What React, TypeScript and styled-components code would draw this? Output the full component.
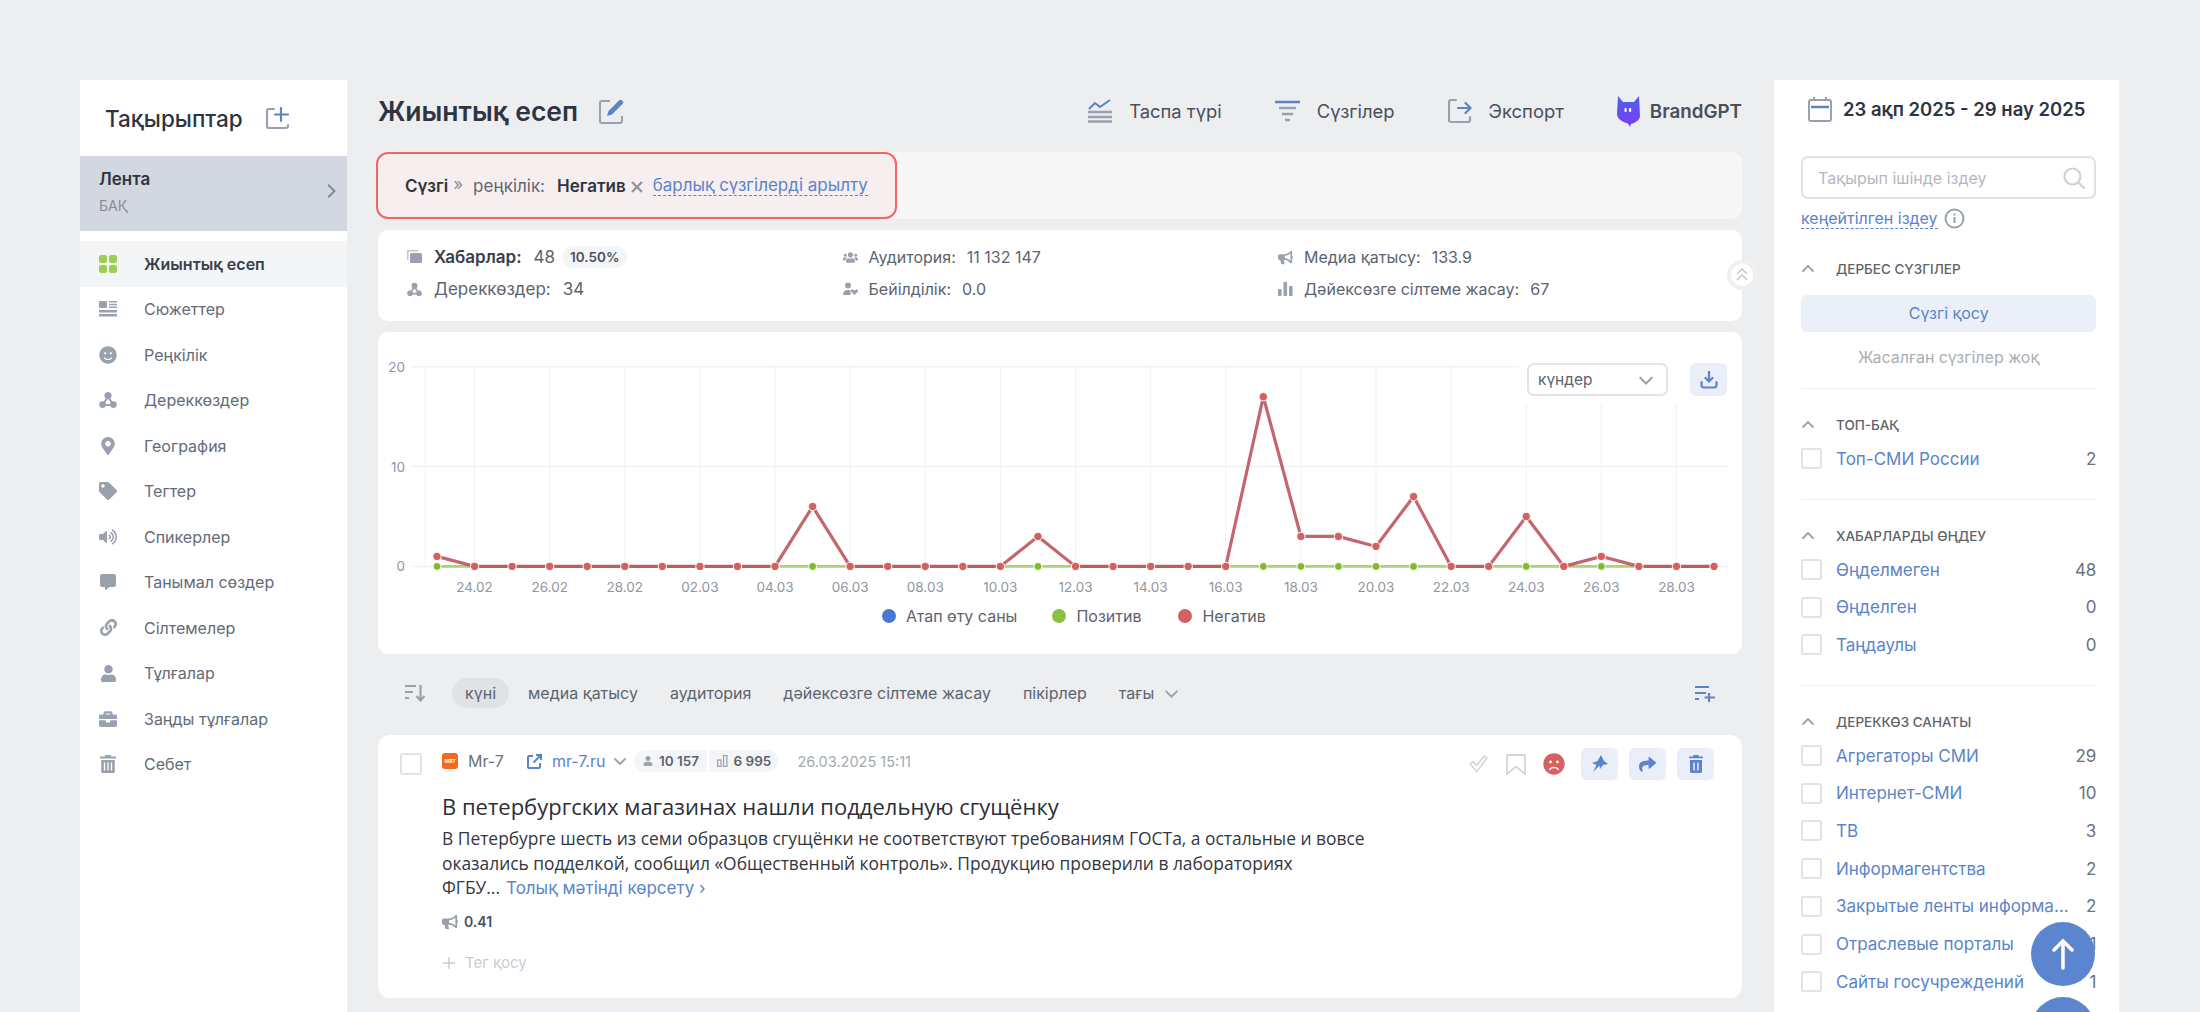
import React from "react";
import styled, { createGlobalStyle } from "styled-components";
import {
  FaBriefcase,
  FaBullhorn,
  FaCommentAlt,
  FaFrown,
  FaLink,
  FaMapMarkerAlt,
  FaShare,
  FaSmile,
  FaTag,
  FaUser,
  FaUsers,
  FaVolumeUp,
} from "react-icons/fa";

const BLUE = "#5b84c9";
const GRAY = "#9aa1ae";

const GlobalStyle = createGlobalStyle`
  html, body {
    margin: 0;
    height: 100%;
    overflow: hidden;
    background: #edeef0;
  }
  body {
    font-family: Inter, "Noto Sans", sans-serif;
    color: #2f3540;
  }
  * {
    box-sizing: border-box;
  }
`;

const Page = styled.div`
  display: flex;
  height: 1012px;
  overflow: hidden;
  padding: 80px 81px 0 80px;
`;

/* left column */
const LeftBar = styled.aside`
  background: #fff;
  flex: 0 0 267px;
  margin-right: 31px;
`;

const LeftHead = styled.div`
  align-items: center;
  display: flex;
  font-size: 22.5px;
  font-weight: 500;
  gap: 22px;
  height: 76px;
  padding: 4px 0 4px 25px;
`;

const Feed = styled.div`
  background: #d3d7df;
  height: 75px;
  margin-bottom: 10px;
  padding: 12px 19px;
  position: relative;
  b {
    display: block;
    font-size: 17px;
    font-weight: 600;
    line-height: 22px;
  }
  span {
    color: #858c99;
    display: block;
    font-size: 14px;
    line-height: 18px;
    margin-top: 7px;
  }
  svg {
    position: absolute;
    right: 8px;
    top: 27px;
  }
`;

const NavItem = styled.div<{ $active?: boolean }>`
  align-items: center;
  background: ${({ $active }) => ($active ? "#f4f5f7" : "transparent")};
  color: ${({ $active }) => ($active ? "#3a404b" : "#646b78")};
  display: flex;
  font-size: 16px;
  font-weight: ${({ $active }) => ($active ? 600 : 400)};
  gap: 27px;
  height: 45.5px;
  padding-left: 19px;
`;

const NavGlyph = styled.span`
  align-items: center;
  color: ${GRAY};
  display: flex;
  flex: 0 0 18px;
  height: 18px;
  justify-content: center;
`;

/* middle column */
const Main = styled.main`
  flex: 0 0 1364px;
  margin-right: 32px;
`;

const TopRow = styled.div`
  align-items: center;
  display: flex;
  height: 62px;
  margin-bottom: 10px;
`;

const Title = styled.h1`
  font-size: 26.5px;
  font-weight: 600;
  margin: 0 21px 0 0;
`;

const ToolList = styled.div`
  align-items: center;
  display: flex;
  gap: 53px;
  margin-left: auto;
`;

const Tool = styled.div<{ $strong?: boolean }>`
  align-items: center;
  color: #4a505c;
  display: flex;
  font-size: ${({ $strong }) => ($strong ? 18.8 : 18.4)}px;
  font-weight: ${({ $strong }) => ($strong ? 600 : 400)};
  gap: ${({ $strong }) => ($strong ? 10 : 17)}px;
`;

const FilterShell = styled.div`
  background: #f7f7f7;
  border-radius: 10px;
  height: 67px;
  margin-bottom: 11px;
`;

const FilterBox = styled.div`
  align-items: center;
  background: #f7eeef;
  border: 2px solid #f56462;
  border-radius: 12px;
  color: #5f6572;
  display: inline-flex;
  font-size: 17px;
  height: 67px;
  margin-left: -2px;
  padding: 0 27px;
  b {
    color: #2f3540;
    font-weight: 600;
  }
`;

const FilterMark = styled.span`
  color: #8a8f9a;
  margin: -3px 10px 0 5px;
`;

const ClearCross = styled.span`
  display: inline-flex;
  margin: 2px 10px 0 5px;
`;

const DashedLink = styled.span`
  border-bottom: 1px dashed ${BLUE};
  color: ${BLUE};
  line-height: 20px;
`;

const StatsCard = styled.section`
  background: #fff;
  border-radius: 10px;
  display: grid;
  grid-template-columns: 435.5px 435.5px 1fr;
  grid-template-rows: 32px 32px;
  height: 91px;
  margin-bottom: 11px;
  padding: 11px 0 0 29px;
  position: relative;
`;

const Stat = styled.div<{ $large?: boolean }>`
  align-items: center;
  color: #5c6370;
  display: flex;
  font-size: ${({ $large }) => ($large ? 17 : 16)}px;
  gap: ${({ $large }) => ($large ? 12 : 11)}px;
  b {
    color: #3a404b;
    font-weight: 600;
  }
  svg {
    flex: 0 0 15px;
  }
`;

const Share = styled.span`
  background: #f4f5f7;
  border-radius: 11px;
  color: #4a505c;
  font-size: 13.5px;
  font-weight: 600;
  line-height: 22px;
  margin-left: -5px;
  padding: 0 8px;
`;

const CollapseKnob = styled.button`
  align-items: center;
  background: #fff;
  border: 4px solid #eff0f2;
  border-radius: 50%;
  display: flex;
  height: 30px;
  justify-content: center;
  padding: 0;
  position: absolute;
  right: -15px;
  top: 30px;
  width: 30px;
`;

const ChartCard = styled.section`
  background: #fff;
  border-radius: 10px;
  height: 322px;
  margin-bottom: 24px;
  position: relative;
  svg text {
    fill: #8f95a1;
    font-family: Inter, sans-serif;
    font-size: 13.5px;
  }
`;

const ChartTools = styled.div`
  background: #fff;
  display: flex;
  gap: 22px;
  height: 45px;
  padding: 5px 0 0 8px;
  position: absolute;
  right: 15px;
  top: 26px;
  width: 208px;
`;

const RangeSelect = styled.div`
  align-items: center;
  background: #fff;
  border: 2px solid #e1e4ea;
  border-radius: 7px;
  color: #5c6370;
  display: flex;
  font-size: 15.5px;
  height: 33px;
  justify-content: space-between;
  padding: 0 12px 0 9px;
  width: 141px;
`;

const SoftButton = styled.button<{ $h: number }>`
  align-items: center;
  background: #e9eef8;
  border: 0;
  border-radius: 6px;
  color: ${BLUE};
  display: flex;
  height: ${({ $h }) => $h}px;
  justify-content: center;
  padding: 0;
  width: 37px;
`;

const Legend = styled.div`
  color: #5c6370;
  display: flex;
  font-size: 16px;
  margin-top: 4px;
  padding-left: 504px;
`;

const LegendItem = styled.span<{ $color: string; $gap: number }>`
  align-items: center;
  display: flex;
  gap: 10px;
  margin-right: ${({ $gap }) => $gap}px;
  line-height: 24px;
  &::before {
    background: ${({ $color }) => $color};
    border-radius: 50%;
    content: "";
    height: 14px;
    width: 14px;
  }
`;

const SortRow = styled.div`
  align-items: center;
  color: #5c6370;
  display: flex;
  font-size: 16px;
  gap: 32px;
  height: 30px;
  margin-bottom: 27px;
  padding: 0 27px;
`;

const SortIconSlot = styled.span`
  display: flex;
  margin-right: -5px;
`;

const SortTab = styled.span<{ $active?: boolean }>`
  background: ${({ $active }) => ($active ? "#dfe2e6" : "transparent")};
  border-radius: 15px;
  line-height: 30px;
  margin-right: ${({ $active }) => ($active ? -13 : 0)}px;
  padding: 0 ${({ $active }) => ($active ? 13 : 0)}px;
  svg {
    margin-left: 10px;
    vertical-align: -2px;
  }
`;

const SortAdd = styled.span`
  display: flex;
  margin-left: auto;
`;

const Article = styled.article`
  background: #fff;
  border-radius: 12px;
  display: grid;
  grid-template-columns: 42px 1fr;
  height: 263px;
  padding: 13px 28px 26px 22px;
`;

const Box = styled.span<{ $size?: number }>`
  background: #fff;
  border: 2px solid #e1e3e9;
  border-radius: 3px;
  display: block;
  flex: none;
  height: ${({ $size }) => $size ?? 21}px;
  width: ${({ $size }) => $size ?? 21}px;
`;

const ArticleBox = styled.div`
  padding-top: 5px;
`;

const MetaRow = styled.div`
  align-items: center;
  color: #6b7280;
  display: flex;
  font-size: 16px;
  height: 32px;
`;

const Favicon = styled.span`
  align-items: center;
  background: #f5691d;
  border-radius: 3px;
  color: #fff;
  display: flex;
  font-size: 5px;
  font-weight: 700;
  height: 16px;
  justify-content: center;
  margin: -6px 10px 0 0;
  width: 16px;
`;

const MetaText = styled.span<{ $blue?: boolean }>`
  color: ${({ $blue }) => ($blue ? BLUE : "#6b7280")};
  margin-top: -6px;
`;

const LinkGlyph = styled.span`
  display: flex;
  margin: -6px 10px 0 23px;
`;

const LinkMore = styled.span`
  display: flex;
  margin: -6px 0 0 8px;
`;

const ReachPill = styled.span<{ $side: "left" | "right" }>`
  align-items: center;
  background: #f4f5f7;
  border-radius: ${({ $side }) => ($side === "left" ? "11px 0 0 11px" : "0 11px 11px 0")};
  color: #5c6370;
  display: flex;
  font-size: 13.5px;
  font-weight: 600;
  gap: 6px;
  height: 22px;
  justify-content: center;
  margin: -6px 0 0 ${({ $side }) => ($side === "left" ? 7 : 2)}px;
  width: ${({ $side }) => ($side === "left" ? 73 : 69)}px;
`;

const PostDate = styled.span`
  color: #a5a9b2;
  font-size: 14.5px;
  margin: -6px 0 0 19px;
`;

const Actions = styled.div`
  align-items: center;
  display: flex;
  margin-left: auto;
`;

const ActionGlyph = styled.span<{ $right: number }>`
  display: flex;
  margin-right: ${({ $right }) => $right}px;
`;

const ActionButtons = styled.div`
  display: flex;
  gap: 11px;
`;

const ArticleTitle = styled.h2`
  color: #2b2f36;
  font-family: "Open Sans", sans-serif;
  font-size: 22px;
  font-weight: 400;
  line-height: 28px;
  margin: 12px 0 6px;
`;

const ArticleBody = styled.p`
  color: #33373e;
  font-family: "Open Sans", sans-serif;
  font-size: 17.4px;
  line-height: 24.5px;
  margin: 0;
`;

const MoreLink = styled.span`
  color: ${BLUE};
  font-family: Inter, sans-serif;
  font-size: 17px;
  margin-left: 6px;
`;

const RatingRow = styled.div`
  align-items: center;
  color: #4a505c;
  display: flex;
  font-size: 14px;
  font-weight: 600;
  gap: 6px;
  height: 20px;
  margin-top: 11px;
`;

const AddTag = styled.div`
  align-items: center;
  color: #c9ccd2;
  display: flex;
  font-size: 15px;
  gap: 9px;
  height: 20px;
  margin-top: 21px;
`;

/* right column */
const RightBar = styled.aside`
  background: #fff;
  flex: 0 0 345px;
  padding: 17px 23px 0 27px;
`;

const DateRow = styled.div`
  align-items: center;
  display: flex;
  font-size: 18.5px;
  font-weight: 600;
  gap: 11px;
  height: 24px;
  margin-left: 7px;
`;

const Search = styled.div`
  align-items: center;
  border: 2px solid #dfe1e8;
  border-radius: 7px;
  color: #b5b8bf;
  display: flex;
  font-size: 16px;
  height: 43px;
  justify-content: space-between;
  margin-top: 35px;
  padding: 0 9px 0 15px;
`;

const AdvancedRow = styled.div`
  align-items: center;
  display: flex;
  font-size: 16px;
  gap: 6px;
  height: 20px;
  margin: 9px 0 5px;
`;

const Group = styled.section<{ $flat?: boolean }>`
  border-bottom: ${({ $flat }) => ($flat ? "0" : "1px solid #eff0f2")};
  padding: 26px 0 21px;
`;

const GroupHead = styled.div`
  align-items: center;
  color: #5f6368;
  display: flex;
  font-size: 13.5px;
  font-weight: 500;
  gap: 21px;
  height: 20px;
  margin-bottom: 5px;
`;

const AddFilter = styled.div`
  background: #ebeff8;
  border-radius: 6px;
  color: ${BLUE};
  font-size: 16px;
  line-height: 37px;
  margin-top: 16px;
  text-align: center;
`;

const NoFilters = styled.div`
  color: #aaadb3;
  font-size: 16px;
  line-height: 20px;
  margin-top: 15px;
  text-align: center;
`;

const CheckRow = styled.div`
  align-items: center;
  display: flex;
  font-size: 17px;
  gap: 14px;
  height: 37.7px;
`;

const CheckLabel = styled.span`
  color: ${BLUE};
  flex: 1;
  max-width: 236px;
  overflow: hidden;
  text-overflow: ellipsis;
  white-space: nowrap;
`;

const Count = styled.span`
  color: #6b7280;
  margin-left: auto;
`;

const FloatButton = styled.button<{ $bottom: number }>`
  align-items: center;
  background: #5c85d0;
  border: 0;
  border-radius: 50%;
  bottom: ${({ $bottom }) => $bottom}px;
  display: flex;
  height: 64px;
  justify-content: center;
  padding: 0;
  position: fixed;
  right: 105px;
  width: 64px;
`;

const Chevron = ({ dir = "down", size = 14, color = GRAY }: { dir?: string; size?: number; color?: string }) => {
  const d = { down: "M2 5l5 5 5-5", up: "M2 9l5-5 5 5", right: "M5 2l5 5-5 5" }[dir];
  return (
    <svg width={size} height={size} viewBox="0 0 14 14" fill="none" stroke={color} strokeWidth="1.8" strokeLinecap="round">
      <path d={d} />
    </svg>
  );
};

const SourcesGlyph = ({ size = 18 }: { size?: number }) => (
  <svg width={size} height={size} viewBox="0 0 18 18" fill={GRAY}>
    <path d="M9 6L4 13M9 6l5 7M4 14h10" stroke={GRAY} strokeWidth="2" />
    <circle cx="9" cy="4.5" r="3.6" />
    <circle cx="3.6" cy="13.6" r="3.4" />
    <circle cx="14.4" cy="13.6" r="3.4" />
  </svg>
);

const navItems: { label: string; icon: React.ReactNode }[] = [
  {
    label: "Жиынтық есеп",
    icon: (
      <svg width="18" height="18" viewBox="0 0 18 18" fill="#9bcf53">
        <rect width="8" height="8" rx="2" />
        <rect x="10" width="8" height="8" rx="2" />
        <rect y="10" width="8" height="8" rx="2" />
        <rect x="10" y="10" width="8" height="8" rx="2" />
      </svg>
    ),
  },
  {
    label: "Сюжеттер",
    icon: (
      <svg width="18" height="16" viewBox="0 0 18 16" fill={GRAY}>
        <rect width="8" height="7" rx="1" />
        <path d="M10 0h8v1.6h-8zM10 2.7h8v1.6h-8zM10 5.4h8V7h-8zM0 9h18v2.4H0zM0 13h18v2.4H0z" />
      </svg>
    ),
  },
  { label: "Реңкілік", icon: <FaSmile size={18} /> },
  { label: "Дереккөздер", icon: <SourcesGlyph /> },
  { label: "География", icon: <FaMapMarkerAlt size={18} /> },
  { label: "Тегтер", icon: <FaTag size={18} /> },
  { label: "Спикерлер", icon: <FaVolumeUp size={18} /> },
  { label: "Танымал сөздер", icon: <FaCommentAlt size={16} /> },
  { label: "Сілтемелер", icon: <FaLink size={17} /> },
  { label: "Тұлғалар", icon: <FaUser size={17} /> },
  { label: "Заңды тұлғалар", icon: <FaBriefcase size={18} /> },
  {
    label: "Себет",
    icon: (
      <svg width="16" height="18" viewBox="0 0 16 18" fill={GRAY}>
        <path d="M5.5 0h5l.7 1.6H16v1.9H0V1.6h4.800zM1.200 5h13.600v11.500a1.500 1.500 0 0 1-1.500 1.500H2.700a1.500 1.500 0 0 1-1.500-1.500z" />
        <path d="M4.500 7.500v8M8 7.500v8M11.500 7.500v8" stroke="#fff" strokeWidth="1.300" />
      </svg>
    ),
  },
];

const negative = [1, 0, 0, 0, 0, 0, 0, 0, 0, 0, 6, 0, 0, 0, 0, 0, 3, 0, 0, 0, 0, 0, 17, 3, 3, 2, 7, 0, 0, 5, 0, 1, 0, 0, 0];
const days = [
  "23.02", "24.02", "25.02", "26.02", "27.02", "28.02", "01.03", "02.03", "03.03", "04.03", "05.03", "06.03",
  "07.03", "08.03", "09.03", "10.03", "11.03", "12.03", "13.03", "14.03", "15.03", "16.03", "17.03", "18.03",
  "19.03", "20.03", "21.03", "22.03", "23.03", "24.03", "25.03", "26.03", "27.03", "28.03", "29.03",
];
const xOf = (i: number) => 59 + 37.56 * i;
const yOf = (v: number) => 234.4 - 9.98 * v;

const Chart = () => (
  <svg width="1364" height="268" viewBox="0 0 1364 268" style={{ display: "block" }}>
    {[20, 10, 0].map((v) => (
      <g key={v}>
        <line x1="33" x2="1350" y1={yOf(v)} y2={yOf(v)} stroke="#f0f1f3" strokeWidth="1.5" />
        <text x="27" y={yOf(v) + 5} textAnchor="end">
          {v}
        </text>
      </g>
    ))}
    <line x1="47" x2="47" y1={yOf(20)} y2={yOf(0) + 2} stroke="#f0f1f3" />
    {days.map((d, i) =>
      i % 2 === 1 ? (
        <g key={d}>
          <line x1={xOf(i)} x2={xOf(i)} y1={yOf(20)} y2={yOf(0) + 2} stroke="#f0f1f3" />
          <text x={xOf(i)} y="260" textAnchor="middle">
            {d}
          </text>
        </g>
      ) : null,
    )}
    <polyline points={days.map((_, i) => `${xOf(i)},${yOf(0)}`).join(" ")} fill="none" stroke="#a9d27a" strokeWidth="2.800" />
    {days.map((d, i) => (
      <circle key={d} cx={xOf(i)} cy={yOf(0)} r="4" fill="#7fbb2e" stroke="#fff" />
    ))}
    <polyline
      points={negative.map((v, i) => `${xOf(i)},${yOf(v)}`).join(" ")}
      fill="none"
      stroke="#b94c53"
      strokeOpacity="0.85"
      strokeWidth="3.200"
    />
    {negative.map((v, i) => (
      <circle key={days[i]} cx={xOf(i)} cy={yOf(v)} r="4.200" fill="#d4605f" stroke="#fff" />
    ))}
  </svg>
);

const groups = [
  { title: "ТОП-БАҚ", rows: [["Топ-СМИ России", "2"]] },
  {
    title: "ХАБАРЛАРДЫ ӨҢДЕУ",
    rows: [
      ["Өңделмеген", "48"],
      ["Өңделген", "0"],
      ["Таңдаулы", "0"],
    ],
  },
];

const categories = [
  ["Агрегаторы СМИ", "29"],
  ["Интернет-СМИ", "10"],
  ["ТВ", "3"],
  ["Информагентства", "2"],
  ["Закрытые ленты информационных агентств", "2"],
  ["Отраслевые порталы", "1"],
  ["Сайты госучреждений", "1"],
];

const CheckRows = ({ rows }: { rows: string[][] }) => (
  <>
    {rows.map(([label, count]) => (
      <CheckRow key={label}>
        <Box />
        <CheckLabel>{label}</CheckLabel>
        <Count>{count}</Count>
      </CheckRow>
    ))}
  </>
);

export default function App() {
  return (
    <>
      <GlobalStyle />
      <Page>
        <LeftBar>
          <LeftHead>
            Тақырыптар
            <svg width="24" height="24" viewBox="0 0 24 24" fill="none" strokeWidth="2.200" strokeLinecap="round">
              <path d="M9 3H4a2 2 0 0 0-2 2v15a2 2 0 0 0 2 2h17a2 2 0 0 0 2-2v-1" stroke={GRAY} />
              <path d="M16 2v13M10 8.500h13" stroke={BLUE} />
            </svg>
          </LeftHead>
          <Feed>
            <b>Лента</b>
            <span>БАҚ</span>
            <Chevron dir="right" size={16} color="#858c99" />
          </Feed>
          {navItems.map(({ label, icon }, i) => (
            <NavItem key={label} $active={i === 0}>
              <NavGlyph>{icon}</NavGlyph>
              {label}
            </NavItem>
          ))}
        </LeftBar>

        <Main>
          <TopRow>
            <Title>Жиынтық есеп</Title>
            <svg width="25" height="25" viewBox="0 0 25 25" fill="none">
              <path d="M11 2H3a2 2 0 0 0-2 2v18a2 2 0 0 0 2 2h18a2 2 0 0 0 2-2v-5" stroke={GRAY} strokeWidth="2" />
              <path d="M8 17l1.500-5L20 1.500a2 2 0 0 1 3 0l.5.5a2 2 0 0 1 0 3L13 15.500z" fill={BLUE} />
            </svg>
            <ToolList>
              <Tool>
                <svg width="24" height="24" viewBox="0 0 24 24" fill="none">
                  <path d="M1 10l6-6 5 4 10-7" stroke={BLUE} strokeWidth="2" />
                  <path d="M0 13h24M0 18h24M0 22.500h24" stroke={GRAY} strokeWidth="2.500" />
                </svg>
                Таспа түрі
              </Tool>
              <Tool>
                <svg width="25" height="24" viewBox="0 0 25 24" fill="none" strokeWidth="2.500">
                  <path d="M0 3h25" stroke={BLUE} />
                  <path d="M4 9h17M7 15h11M10 21h5" stroke={GRAY} />
                </svg>
                Сүзгілер
              </Tool>
              <Tool>
                <svg width="24" height="26" viewBox="0 0 24 26" fill="none" strokeWidth="2.200" strokeLinecap="round">
                  <path d="M8 2H3a2 2 0 0 0-2 2v18a2 2 0 0 0 2 2h17a2 2 0 0 0 2-2v-3" stroke={GRAY} />
                  <path d="M10 10h12M17.500 5l5 5-5 5" stroke={BLUE} />
                </svg>
                Экспорт
              </Tool>
              <Tool $strong>
                <svg width="23" height="31" viewBox="0 0 23 31">
                  <defs>
                    <linearGradient id="brand" x1="0" y1="0" x2="0" y2="1">
                      <stop offset="0" stopColor="#4b63f2" />
                      <stop offset="1" stopColor="#7a3cf0" />
                    </linearGradient>
                  </defs>
                  <path d="M1 0l5 6h11l5-6 1 20c0 4-5 7-9 8l-1 3-2-3.500C6 26.500 0 23 0 18z" fill="url(#brand)" />
                  <rect x="7.500" y="12" width="2.200" height="4" rx="1" fill="#fff" />
                  <rect x="12" y="12" width="2.200" height="4" rx="1" fill="#fff" />
                </svg>
                BrandGPT
              </Tool>
            </ToolList>
          </TopRow>

          <FilterShell>
            <FilterBox>
              <b>Сүзгі</b>
              <FilterMark>»</FilterMark>
              реңкілік:
              <b style={{ marginLeft: 12 }}>Негатив</b>
              <ClearCross>
                <svg width="12" height="12" viewBox="0 0 12 12" stroke="#8f95a1" strokeWidth="2.400">
                  <path d="M1 1l10 10M11 1L1 11" />
                </svg>
              </ClearCross>
              <DashedLink>барлық сүзгілерді арылту</DashedLink>
            </FilterBox>
          </FilterShell>

          <StatsCard>
            <Stat $large>
              <svg width="15" height="14" viewBox="0 0 15 14" fill={GRAY}>
                <path d="M0 0h11v1.500H1.500V10H0z" opacity=".6" />
                <rect x="3" y="3" width="12" height="10" rx="1.500" />
              </svg>
              <b>Хабарлар:</b> 48
              <Share>10.50%</Share>
            </Stat>
            <Stat>
              <FaUsers size={15} color={GRAY} />
              Аудитория: <span>11 132 147</span>
            </Stat>
            <Stat>
              <FaBullhorn size={15} color={GRAY} />
              Медиа қатысу: <span>133.9</span>
            </Stat>
            <Stat $large>
              <SourcesGlyph size={15} />
              Дереккөздер: <span>34</span>
            </Stat>
            <Stat>
              <svg width="15" height="14" viewBox="0 0 15 14" fill={GRAY}>
                <circle cx="5" cy="3.500" r="3" />
                <path d="M0 13c0-3 2-5 5-5 1 0 2 .3 2.500.8V13zM11.500 13L8 9.500c-1-1.500 1.500-3 3.500-1 2-2 4.500-.5 3.500 1z" />
              </svg>
              Бейілділік: <span>0.0</span>
            </Stat>
            <Stat>
              <svg width="15" height="14" viewBox="0 0 15 14" fill={GRAY}>
                <rect y="7" width="3.600" height="7" rx=".8" />
                <rect x="5.500" width="3.600" height="14" rx=".8" />
                <rect x="11" y="4" width="3.600" height="10" rx=".8" />
              </svg>
              Дәйексөзге сілтеме жасау: <span>67</span>
            </Stat>
            <CollapseKnob>
              <svg width="12" height="14" viewBox="0 0 12 14" fill="none" stroke="#c5c9d1" strokeWidth="1.600">
                <path d="M1 6l5-5 5 5M1 12l5-5 5 5" />
              </svg>
            </CollapseKnob>
          </StatsCard>

          <ChartCard>
            <Chart />
            <ChartTools>
              <RangeSelect>
                күндер
                <Chevron size={16} />
              </RangeSelect>
              <SoftButton $h={33}>
                <svg width="18" height="18" viewBox="0 0 18 18" fill="none" stroke={BLUE} strokeWidth="2.200" strokeLinecap="round">
                  <path d="M9 1v9M5.500 7L9 10.500 12.500 7" />
                  <path d="M1.500 11v3a2.500 2.500 0 0 0 2.500 2.500h10a2.500 2.500 0 0 0 2.500-2.500v-3" />
                </svg>
              </SoftButton>
            </ChartTools>
            <Legend>
              <LegendItem $color="#4a77d4" $gap={35}>Атап өту саны</LegendItem>
              <LegendItem $color="#8cc040" $gap={37}>Позитив</LegendItem>
              <LegendItem $color="#d4605f" $gap={0}>Негатив</LegendItem>
            </Legend>
          </ChartCard>

          <SortRow>
            <SortIconSlot>
              <svg width="20" height="18" viewBox="0 0 20 18" fill="none" stroke={GRAY} strokeWidth="2.200">
                <path d="M0 2h11M0 8h8M0 14h4M15.500 1v15M11.500 12l4 4.500 4-4.500" />
              </svg>
            </SortIconSlot>
            <SortTab $active>күні</SortTab>
            <SortTab>медиа қатысу</SortTab>
            <SortTab>аудитория</SortTab>
            <SortTab>дәйексөзге сілтеме жасау</SortTab>
            <SortTab>пікірлер</SortTab>
            <SortTab>
              тағы
              <Chevron size={15} />
            </SortTab>
            <SortAdd>
              <svg width="20" height="17" viewBox="0 0 20 17" fill="none" stroke={BLUE} strokeWidth="2.200">
                <path d="M0 2h14M0 8h11M0 14h4M14 8v9M9.500 12.500H20" />
              </svg>
            </SortAdd>
          </SortRow>

          <Article>
            <ArticleBox>
              <Box $size={22} />
            </ArticleBox>
            <div>
              <MetaRow>
                <Favicon>MR7</Favicon>
                <MetaText>Mr-7</MetaText>
                <LinkGlyph>
                  <svg width="15" height="15" viewBox="0 0 15 15" fill="none" stroke={BLUE} strokeWidth="2">
                    <path d="M6 2H2a1 1 0 0 0-1 1v10a1 1 0 0 0 1 1h10a1 1 0 0 0 1-1V9M9 1h5v5M14 1L6.500 8.500" />
                  </svg>
                </LinkGlyph>
                <MetaText $blue>mr-7.ru</MetaText>
                <LinkMore>
                  <Chevron size={14} />
                </LinkMore>
                <ReachPill $side="left">
                  <FaUser size={10} color={GRAY} />
                  10 157
                </ReachPill>
                <ReachPill $side="right">
                  <svg width="11" height="12" viewBox="0 0 11 12" fill="none" stroke={GRAY} strokeWidth="1.200">
                    <rect x=".6" y="5" width="3.400" height="6.400" />
                    <rect x="6.500" y=".6" width="3.400" height="10.800" />
                  </svg>
                  6 995
                </ReachPill>
                <PostDate>26.03.2025 15:11</PostDate>
                <Actions>
                  <ActionGlyph $right={18}>
                    <svg width="19" height="18" viewBox="0 0 19 18" fill="none" stroke="#d3d6dc" strokeWidth="1.600">
                      <path d="M1 9l3-2.500 3.500 4L15.500 1 18 3 7.800 16.500z" />
                    </svg>
                  </ActionGlyph>
                  <ActionGlyph $right={17}>
                    <svg width="20" height="21" viewBox="0 0 20 21" fill="none" stroke="#d3d6dc" strokeWidth="1.800">
                      <path d="M1 1h18v19l-9-7.500L1 20z" />
                    </svg>
                  </ActionGlyph>
                  <ActionGlyph $right={16}>
                    <FaFrown size={22} color="#d8605f" />
                  </ActionGlyph>
                  <ActionButtons>
                    <SoftButton $h={32}>
                      <svg width="17" height="19" viewBox="0 0 17 19" fill={BLUE}>
                        <path d="M10 0l3 6 4 3-5 1-3 4-.5-3.500L2 17l3.500-7L1 8l5.500-2z" />
                      </svg>
                    </SoftButton>
                    <SoftButton $h={32}>
                      <FaShare size={17} />
                    </SoftButton>
                    <SoftButton $h={32}>
                      <svg width="14" height="18" viewBox="0 0 14 18" fill={BLUE}>
                        <path d="M4.500 0h5l.6 1.500H14v1.800H0V1.500h3.900zM1 5h12v11.500a1.500 1.500 0 0 1-1.500 1.500h-9A1.500 1.500 0 0 1 1 16.500z" />
                        <path d="M5 7.500v8M9 7.500v8" stroke="#e9eef8" strokeWidth="1.500" />
                      </svg>
                    </SoftButton>
                  </ActionButtons>
                </Actions>
              </MetaRow>
              <ArticleTitle>В петербургских магазинах нашли поддельную сгущёнку</ArticleTitle>
              <ArticleBody>
                В Петербурге шесть из семи образцов сгущёнки не соответствуют требованиям ГОСТа, а остальные и вовсе
                <br />
                оказались подделкой, сообщил «Общественный контроль». Продукцию проверили в лабораториях
                <br />
                ФГБУ...
                <MoreLink>Толық мәтінді көрсету ›</MoreLink>
              </ArticleBody>
              <RatingRow>
                <FaBullhorn size={16} color={GRAY} />
                0.41
              </RatingRow>
              <AddTag>
                <svg width="14" height="14" viewBox="0 0 14 14" stroke="#c9ccd2" strokeWidth="1.400">
                  <path d="M7 1v12M1 7h12" />
                </svg>
                Тег қосу
              </AddTag>
            </div>
          </Article>
        </Main>

        <RightBar>
          <DateRow>
            <svg width="24" height="25" viewBox="0 0 24 25" fill="none">
              <rect x="1" y="3" width="22" height="21" rx="2" stroke={GRAY} strokeWidth="2" />
              <path d="M6 0v4M18 0v4" stroke={GRAY} strokeWidth="2" />
              <path d="M3 10h18" stroke={BLUE} strokeWidth="2.500" />
            </svg>
            23 ақп 2025 - 29 нау 2025
          </DateRow>
          <Search>
            Тақырып ішінде іздеу
            <svg width="22" height="22" viewBox="0 0 22 22" fill="none" stroke="#ced1d8" strokeWidth="2.200" strokeLinecap="round">
              <circle cx="9.500" cy="9.500" r="8" />
              <path d="M15.500 15.500L21 21" />
            </svg>
          </Search>
          <AdvancedRow>
            <DashedLink>кеңейтілген іздеу</DashedLink>
            <svg width="21" height="21" viewBox="0 0 21 21" fill="none" stroke={GRAY} strokeWidth="2">
              <circle cx="10.500" cy="10.500" r="9" />
              <path d="M10.500 9v6M10.500 5.500v2" />
            </svg>
          </AdvancedRow>

          <Group>
            <GroupHead>
              <Chevron dir="up" />
              ДЕРБЕС СҮЗГІЛЕР
            </GroupHead>
            <AddFilter>Сүзгі қосу</AddFilter>
            <NoFilters>Жасалған сүзгілер жоқ</NoFilters>
          </Group>

          {groups.map((g) => (
            <Group key={g.title}>
              <GroupHead>
                <Chevron dir="up" />
                {g.title}
              </GroupHead>
              <CheckRows rows={g.rows} />
            </Group>
          ))}

          <Group $flat>
            <GroupHead>
              <Chevron dir="up" />
              ДЕРЕККӨЗ САНАТЫ
            </GroupHead>
            <CheckRows rows={categories} />
          </Group>
        </RightBar>

        <FloatButton $bottom={26}>
          <svg width="22" height="32" viewBox="0 0 22 32" fill="none" stroke="#fff" strokeWidth="3.500" strokeLinecap="round">
            <path d="M11 30V3M2 12l9-9 9 9" />
          </svg>
        </FloatButton>
        <FloatButton $bottom={-49} />
      </Page>
    </>
  );
}
